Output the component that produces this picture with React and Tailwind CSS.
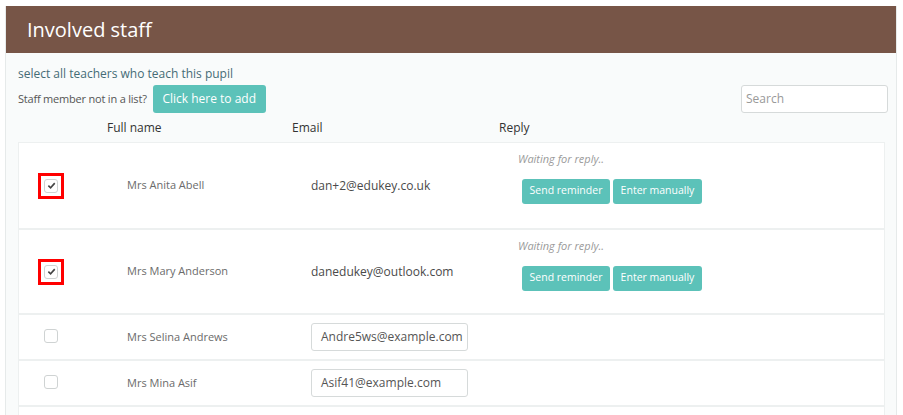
import React from 'react';

const STAFF = [
  { name: 'Mrs Anita Abell', email: 'dan+2@edukey.co.uk', checked: true },
  { name: 'Mrs Mary Anderson', email: 'danedukey@outlook.com', checked: true },
  { name: 'Mrs Selina Andrews', email: 'Andre5ws@example.com', checked: false },
  { name: 'Mrs Mina Asif', email: 'Asif41@example.com', checked: false },
  { name: '', email: '', checked: false },
];

function Checkbox({ checked }) {
  return (
    <span className="flex h-[14px] w-[14px] items-center justify-center rounded-[3px] border border-[#cfd3d3] bg-white">
      {checked && (
        <svg viewBox="0 0 10 10" className="h-[9px] w-[9px]">
          <path d="M1.5 5.2 L4 7.6 L8.6 2.4" fill="none" stroke="#444" strokeWidth="1.8" />
        </svg>
      )}
    </span>
  );
}

function TealButton({ children, className = '' }) {
  return (
    <button className={`rounded-[3px] bg-[#5cc2b9] text-white ${className}`}>{children}</button>
  );
}

export default function App() {
  return (
    <div className="h-[415px] overflow-hidden bg-white pl-[5px] pr-[6px] pt-[6px]" style={{ fontFamily: '"Open Sans", sans-serif' }}>
      <div className="h-[420px] border-x border-[#e6eaea] bg-[#f9fbfb]">
        {/* Header */}
        <div className="flex h-[47px] items-center bg-[#775547] pl-[21px]">
          <h1 className="text-[20px] text-white">Involved staff</h1>
        </div>

        <div className="pl-[12px] pr-[8px]">
          <p className="mt-[13px] text-[12px] leading-[16px] text-[#456c76]">select all teachers who teach this pupil</p>
          <div className="mt-[3px] flex items-center">
            <span className="text-[11px] tracking-[-0.2px] text-[#555]">Staff member not in a list?</span>
            <TealButton className="ml-[6px] h-[28px] w-[113px] text-[12px]">Click here to add</TealButton>
            <div className="ml-auto flex h-[28px] w-[147px] items-center rounded-[3px] border border-[#d6dada] bg-white pl-[4px] text-[12px] text-[#999]">
              Search
            </div>
          </div>

          {/* Column headings */}
          <div className="flex h-[29px] items-center text-[12px] text-[#333]">
            <span className="w-[274px] pl-[89px]">Full name</span>
            <span className="w-[207px]">Email</span>
            <span>Reply</span>
          </div>

          {/* Rows */}
          <div className="mr-[3px] border border-[#edf0f0] bg-white">
            {STAFF.map((s, i) => (
              <div key={i} className={`flex border-[#edf0f0] ${i > 0 ? 'border-t-2' : ''} ${s.checked ? 'h-[85px]' : 'h-[46px]'}`}>
                <div className="flex w-[108px] items-center pl-[19px]">
                  {s.checked ? (
                    <span className="border-[3px] border-[#ff0000] p-[3px]">
                      <Checkbox checked />
                    </span>
                  ) : (
                    <span className="pb-[2px] pl-[6px]"><Checkbox /></span>
                  )}
                </div>
                <div className="flex w-[184px] items-center text-[11px] text-[#6b6b6b]">{s.name}</div>
                <div className="flex w-[207px] items-center">
                  {s.checked ? (
                    <span className="text-[12px] text-[#4a4a4a]">{s.email}</span>
                  ) : (
                    <div className="flex h-[28px] w-[157px] items-center overflow-hidden whitespace-nowrap rounded-[3px] border border-[#d6dada] bg-white pl-[9px] text-[12px] text-[#555]">
                      {s.email}
                    </div>
                  )}
                </div>
                {s.checked && (
                  <div className="pt-[8px]">
                    <p className="text-[11px] italic text-[#9a9a9a]">Waiting for reply..</p>
                    <div className="ml-[4px] mt-[11px] flex gap-[3px]">
                      <TealButton className="h-[25px] w-[88px] text-[10.5px]">Send reminder</TealButton>
                      <TealButton className="h-[25px] w-[89px] text-[10.5px]">Enter manually</TealButton>
                    </div>
                  </div>
                )}
              </div>
            ))}
          </div>
        </div>
      </div>
    </div>
  );
}
